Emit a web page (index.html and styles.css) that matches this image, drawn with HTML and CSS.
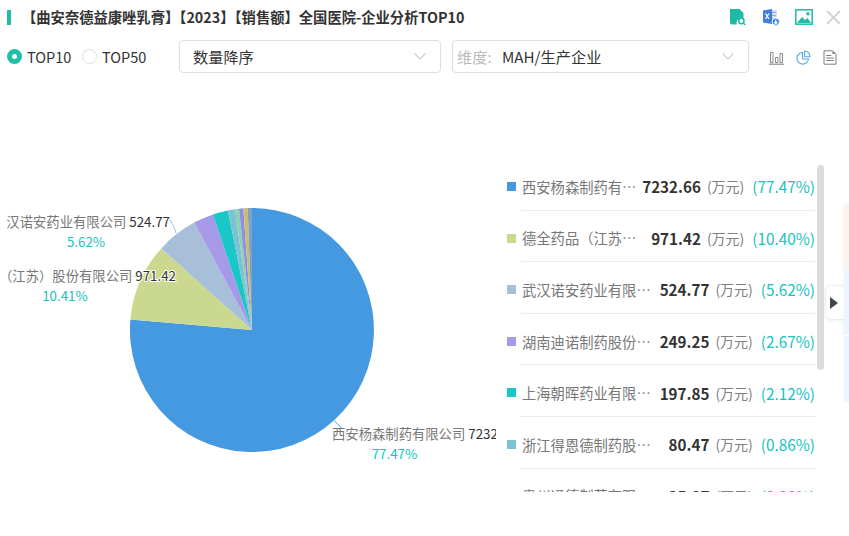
FILE: index.html
```html
<!DOCTYPE html>
<html lang="zh">
<head>
<meta charset="utf-8">
<title>企业分析TOP10</title>
<link rel="stylesheet" href="styles.css">
</head>
<body>
<div class="page">
  <header class="head">
    <span class="accent"></span>
    <h1 class="title">【曲安奈德益康唑乳膏】【2023】【销售额】全国医院-企业分析TOP10</h1>
    <div class="head-icons">
      <svg class="ic" width="18" height="18" viewBox="0 0 18 18"><path fill="#1dbba6" d="M1 1h9.500l4 4v5.200a5 5 0 0 0-6.600 6.300H3a2 2 0 0 1-2-2z"/><circle cx="12.300" cy="13" r="2.700" fill="none" stroke="#1dbba6" stroke-width="1.500"/><path d="M14.300 15l2 2" stroke="#1dbba6" stroke-width="1.500"/></svg>
      <svg class="ic" width="18" height="18" viewBox="0 0 18 18"><path fill="#d8dff5" d="M8 2h7v10H8z"/><path stroke="#8fb0ea" d="M10 4.500h4M10 7.500h4M10 10.500h3"/><path fill="#3d7fe0" d="M1 2.500l9-1.500v15l-9-1.500z"/><path stroke="#fff" stroke-width="1.300" fill="none" d="M3.500 5.500l3.500 5.500M7 5.500l-3.500 5.500"/><circle cx="13.800" cy="13.700" r="3.700" fill="#2f7fe0" stroke="#fff"/><path stroke="#fff" stroke-width="1.200" fill="none" d="M13.800 11.500v3.800M12.200 14l1.600 1.600 1.600-1.600"/></svg>
      <svg class="ic" width="18" height="16" viewBox="0 0 18 16"><rect x=".8" y=".8" width="16.400" height="14.400" fill="#fff" stroke="#1dbba6" stroke-width="1.500"/><path fill="#1dbba6" d="M2 14l5-6 3 3 2.500-2 3.500 5z"/><circle cx="13" cy="4.800" r="1.700" fill="#1dbba6"/></svg>
      <svg class="ic close" width="15" height="15" viewBox="0 0 15 15"><path stroke="#d2d2d2" stroke-width="1.800" d="M1 1l13 13M14 1L1 14"/></svg>
    </div>
  </header>

  <div class="tools">
    <label class="radio"><span class="dot on"></span>TOP10</label>
    <label class="radio second"><span class="dot"></span>TOP50</label>
    <div class="select sort">
      <span class="val">数量降序</span>
      <svg class="chev" width="12" height="7" viewBox="0 0 12 7"><path d="M.5.500l5.500 5.500 5.500-5.500" fill="none" stroke="#c9ccd3" stroke-width="1.100"/></svg>
    </div>
    <div class="select dim">
      <span class="pre">维度:</span><span class="val">MAH/生产企业</span>
      <svg class="chev" width="12" height="7" viewBox="0 0 12 7"><path d="M.5.500l5.500 5.500 5.500-5.500" fill="none" stroke="#c9ccd3" stroke-width="1.100"/></svg>
    </div>
    <div class="type-icons">
      <svg width="15" height="15" viewBox="0 0 15 15"><path fill="none" stroke="#8b8b8b" d="M1.500 2.500h2.500v10H1.500zM6.500 7.500H9v5H6.500zM11 3.500h2.500v9H11z"/><path stroke="#8b8b8b" stroke-width="1.200" d="M0 14.200h15"/></svg>
      <svg width="15" height="15" viewBox="0 0 15 15"><path fill="none" stroke="#5fa8e0" stroke-width="1.100" d="M6.500 2.500a5.800 5.800 0 1 0 6 6.500H6.500z"/><path fill="none" stroke="#5fa8e0" stroke-width="1.100" d="M8.500 1a5.500 5.500 0 0 1 5.500 5.700H8.500z"/></svg>
      <svg width="14" height="15" viewBox="0 0 14 15"><path fill="none" stroke="#7d7d7d" d="M1 .800h8.500l3.500 3.500v9.900H1z"/><path fill="#7d7d7d" d="M9.500 1l3 3h-3z"/><path stroke="#7d7d7d" d="M3.200 5.500h5M3.200 8h7.600M3.200 10.500h7.600"/></svg>
    </div>
  </div>

  <main class="main">
    <svg class="pie" width="496" height="340" viewBox="0 160 496 340">
      <path d="M252 330L252 208A122 122 0 1 1 130.400 319.600Z" fill="#4599e0"/>
      <path d="M252 330L130.400 319.600A122 122 0 0 1 161.300 248.400Z" fill="#cbd990"/>
      <path d="M252 330L161.300 248.400A122 122 0 0 1 194.200 222.600Z" fill="#a7bfd9"/>
      <path d="M252 330L194.200 222.600A122 122 0 0 1 212.900 214.400Z" fill="#a69ae8"/>
      <path d="M252 330L212.900 214.400A122 122 0 0 1 227.900 210.400Z" fill="#1ac6c6"/>
      <path d="M252 330L227.900 210.400A122 122 0 0 1 235 209.200Z" fill="#7bc2d4"/>
      <path d="M252 330L235 209.200A122 122 0 0 1 239 208.700Z" fill="#8fd0b0"/>
      <path d="M252 330L239 208.700A122 122 0 0 1 243.300 208.300Z" fill="#8e8ee8"/>
      <path d="M252 330L243.300 208.300A122 122 0 0 1 247.700 208.100Z" fill="#c8be6e"/>
      <path d="M252 330L247.700 208.100A122 122 0 0 1 252 208Z" fill="#7fa0c8"/>
      <path class="lead" d="M334 420.500L342 428.500" stroke="#4599e0"/>
      <path class="lead" d="M176 233Q174 225 170 220" stroke="#a7bfd9"/>
      <path class="lead" d="M133 275L139 280" stroke="#cbd990"/>
      <text class="lbl" x="332" y="439">西安杨森制药有限公司 <tspan class="num">7232.66</tspan></text>
      <text class="pct" x="394.500" y="459">77.47%</text>
      <text class="lbl end" x="170" y="227">汉诺安药业有限公司 <tspan class="num">524.77</tspan></text>
      <text class="pct" x="86" y="247">5.62%</text>
      <text class="lbl end" x="176" y="281">（江苏）股份有限公司 <tspan class="num">971.42</tspan></text>
      <text class="pct" x="65" y="301">10.41%</text>
    </svg>

    <ul class="legend">
      <li class="row"><i class="sq c1"></i><div class="cell"><span class="name">西安杨森制药有限公司</span><b class="v">7232.66</b><span class="u">(万元)</span><span class="p">(77.47%)</span></div></li>
      <li class="row"><i class="sq c2"></i><div class="cell"><span class="name">德全药品（江苏）股份有限公司</span><b class="v">971.42</b><span class="u">(万元)</span><span class="p">(10.40%)</span></div></li>
      <li class="row"><i class="sq c3"></i><div class="cell"><span class="name">武汉诺安药业有限公司</span><b class="v">524.77</b><span class="u">(万元)</span><span class="p">(5.62%)</span></div></li>
      <li class="row"><i class="sq c4"></i><div class="cell"><span class="name">湖南迪诺制药股份有限公司</span><b class="v">249.25</b><span class="u">(万元)</span><span class="p">(2.67%)</span></div></li>
      <li class="row"><i class="sq c5"></i><div class="cell"><span class="name">上海朝晖药业有限公司</span><b class="v">197.85</b><span class="u">(万元)</span><span class="p">(2.12%)</span></div></li>
      <li class="row"><i class="sq c6"></i><div class="cell"><span class="name">浙江得恩德制药股份有限公司</span><b class="v">80.47</b><span class="u">(万元)</span><span class="p">(0.86%)</span></div></li>
      <li class="row"><i class="sq c7"></i><div class="cell"><span class="name">贵州通德制药有限公司</span><b class="v">35.87</b><span class="u">(万元)</span><span class="p">(0.38%)</span></div></li>
    </ul>
    <div class="thumb"></div>
    <button class="tab" type="button"><svg width="8" height="12" viewBox="0 0 8 12"><path d="M0 0l8 6-8 6z" fill="#41474d"/></svg></button>
    <aside class="card"><div class="pink"></div><div class="blue"></div><div class="blue two"></div></aside>
  </main>
</div>
</body>
</html>
```
FILE: styles.css
```css
* { box-sizing: border-box; }
html, body { margin: 0; padding: 0; background: #fff; }
body { font-family: "Noto Sans CJK SC", "Noto Sans", sans-serif; color: #333; }
.page { width: 849px; height: 536px; overflow: hidden; }

.head { display: flex; align-items: center; height: 34px; padding-left: 7px; }
.accent { width: 4px; height: 15px; background: #1dbfa8; }
.title { margin: 0 0 0 11px; font-size: 14.3px; font-weight: 700; color: #333; line-height: 20px; white-space: nowrap; }
.head-icons { display: flex; align-items: center; margin-left: auto; margin-right: 8px; gap: 15px; }
.ic { display: block; }
.close { margin-left: -2px; }

.tools { display: flex; align-items: center; height: 33px; margin-top: 6px; padding-left: 7px; }
.radio { display: flex; align-items: center; font-size: 14.5px; color: #333; width: 75px; gap: 5px; }
.radio.second { width: 97px; }
.dot { flex: none; width: 15px; height: 15px; border-radius: 50%; border: 1px solid #dcdfe6; background: #fff; }
.dot.on { border: 5px solid #1dbfa8; }
.select { position: relative; display: flex; align-items: center; height: 33px; padding-bottom: 2px; border: 1px solid #dcdfe6; border-radius: 4px; font-size: 15.2px; }
.sort { width: 262px; padding-left: 13px; }
.dim { width: 297px; margin-left: 11px; padding-left: 4px; }
.pre { color: #bbb; width: 45px; }
.val { color: #333; }
.chev { position: absolute; right: 14px; top: 12px; }
.type-icons { display: flex; align-items: center; gap: 12px; margin: 2px 0 0 20px; }
.type-icons svg { display: block; }

.main { display: flex; align-items: flex-start; margin-top: 87px; height: 340px; }
.pie { flex: none; display: block; }
.lead { fill: none; stroke-width: 1; }
.lbl { font-size: 13.33px; fill: #777; }
.lbl.end { text-anchor: end; }
.num { fill: #333; stroke: #fff; stroke-width: 2px; paint-order: stroke; }
.pct { font-size: 13.33px; fill: #16c2c2; text-anchor: middle; }

.legend { flex: none; list-style: none; width: 308px; height: 333px; margin: -1px 0 0 11px; padding: 0; overflow: hidden; }
.row { display: flex; align-items: flex-start; height: 51.6px; }
.sq { flex: none; width: 9px; height: 9px; margin-top: 23px; }
.c1 { background: #4599e0; }
.c2 { background: #cbd990; }
.c3 { background: #a7bfd9; }
.c4 { background: #a69ae8; }
.c5 { background: #1ac6c6; }
.c6 { background: #7bc2d4; }
.c7 { background: #8fd0b0; }
.cell { display: flex; align-items: center; flex: 1; min-width: 0; height: 51.6px; margin-left: 5px; padding: 4px 0 0 1px; border-bottom: 1px solid #ececec; }
.name { flex: 1; min-width: 0; margin-right: 5px; font-size: 14.3px; color: #777; white-space: nowrap; overflow: hidden; text-overflow: ellipsis; }
.v { flex: none; font-size: 15.2px; font-weight: 700; color: #333; }
.u { flex: none; margin-left: 6px; font-size: 14px; color: #808080; }
.p { flex: none; margin-left: 8px; font-size: 15.3px; color: #16c2c2; }

.thumb { flex: none; width: 7px; height: 205px; margin: 5px 0 0 2px; background: #dcdcde; border-radius: 4px; }
.tab { flex: none; display: flex; align-items: center; justify-content: center; width: 19px; height: 35px; margin: 125px 0 0 1px; padding: 0 2px 0 0; background: #fff; border: 1px solid #eee; border-right: 0; border-radius: 6px 0 0 6px; box-shadow: 0 1px 3px rgba(0,0,0,.06); }
.card { flex: none; width: 5px; height: 199px; margin-top: 43px; border-radius: 8px 0 0 8px; overflow: hidden; box-shadow: 0 0 3px rgba(0,0,0,.08); }
.pink { height: 67px; background: #fdf3ee; }
.blue { height: 65px; background: #eef4fd; }
.blue.two { height: 67px; margin-top: 1px; }
```
